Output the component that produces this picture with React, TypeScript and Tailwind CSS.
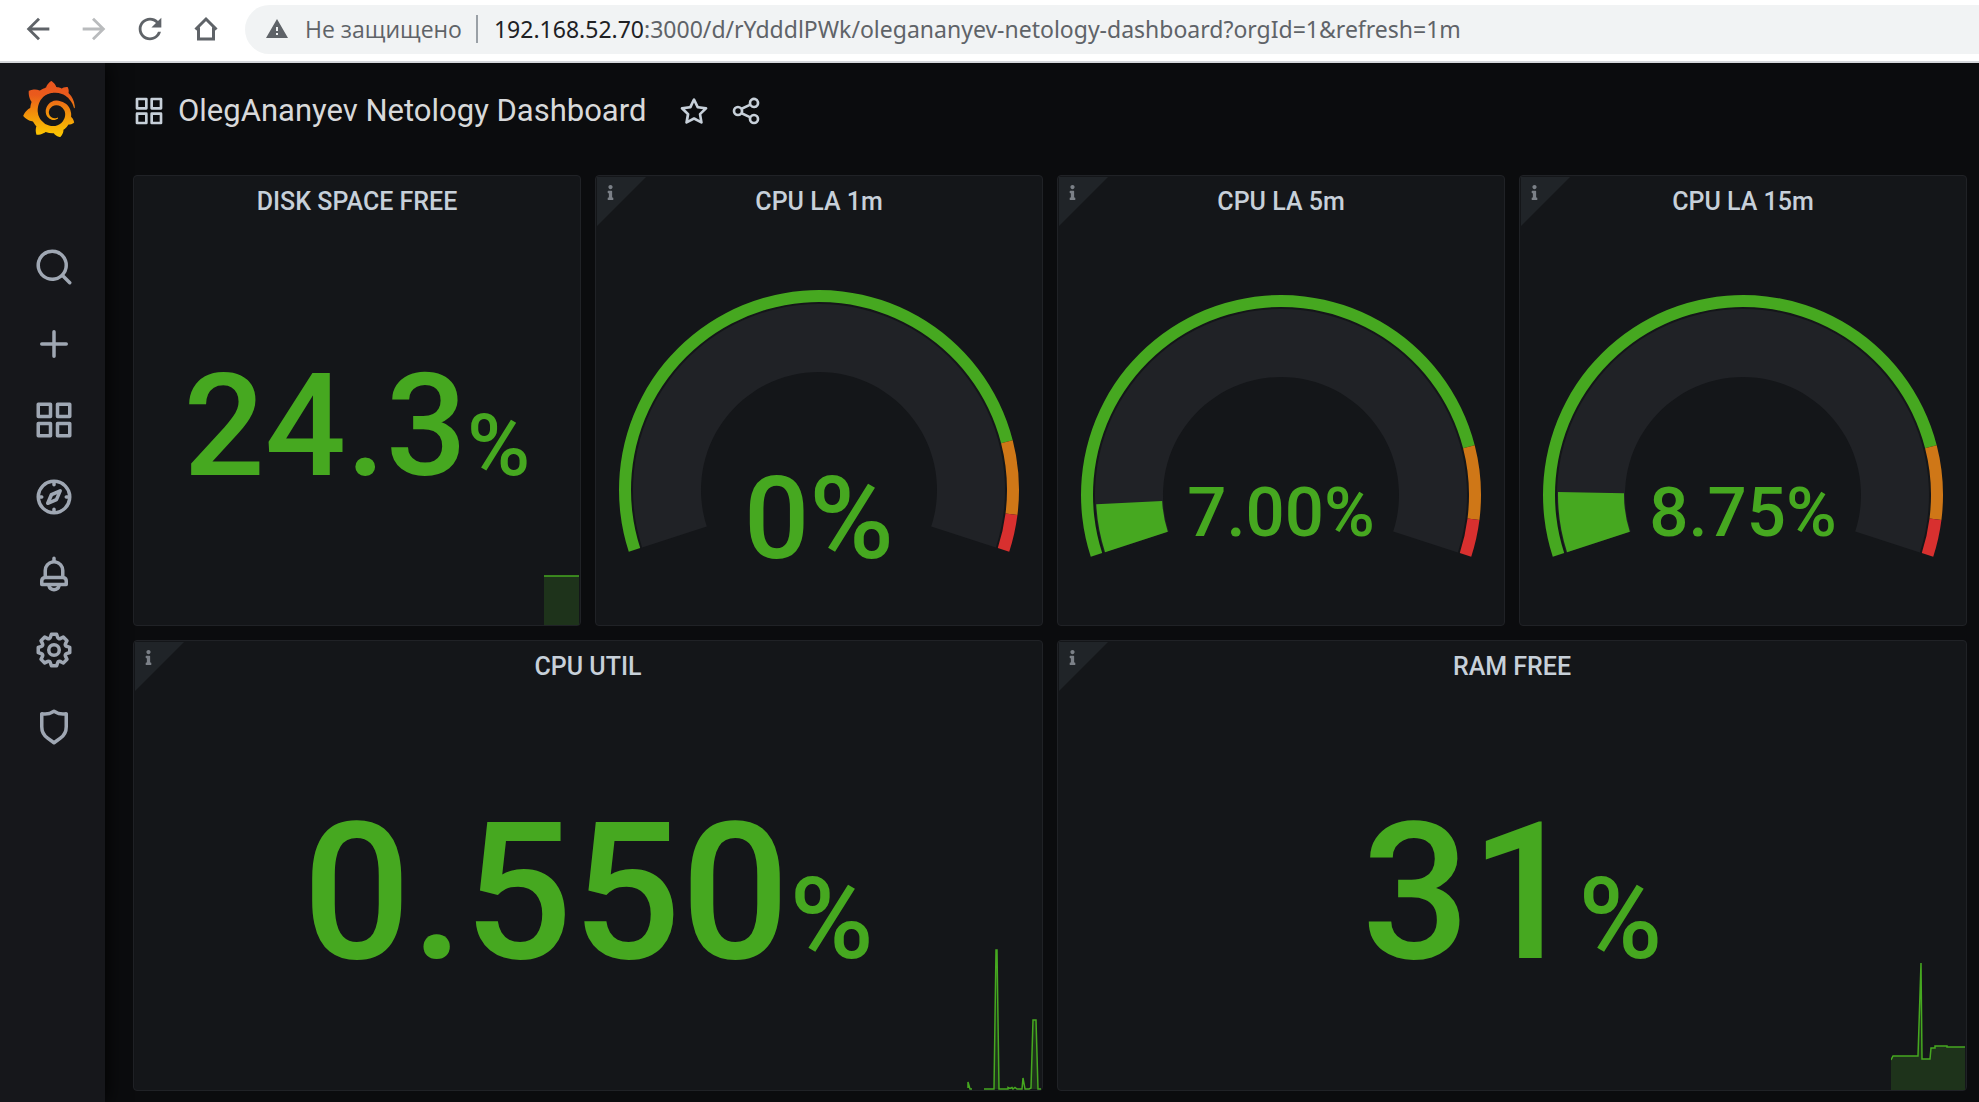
import type { ReactNode } from 'react';
import { MdArrowBack, MdArrowForward, MdRefresh, MdWarning } from 'react-icons/md';
import { SiGrafana } from 'react-icons/si';
import { FaInfo } from 'react-icons/fa';

const icons = {
  search:
    'M21.71,20.29,18,16.61A9,9,0,1,0,16.61,18l3.68,3.68a1,1,0,0,0,1.42,0A1,1,0,0,0,21.71,20.29ZM11,18a7,7,0,1,1,7-7A7,7,0,0,1,11,18Z',
  plus: 'M19,11H13V5a1,1,0,0,0-2,0v6H5a1,1,0,0,0,0,2h6v6a1,1,0,0,0,2,0V13h6a1,1,0,0,0,0-2Z',
  apps: 'M10,13H3a1,1,0,0,0-1,1v7a1,1,0,0,0,1,1h7a1,1,0,0,0,1-1V14A1,1,0,0,0,10,13ZM9,20H4V15H9ZM21,2H14a1,1,0,0,0-1,1v7a1,1,0,0,0,1,1h7a1,1,0,0,0,1-1V3A1,1,0,0,0,21,2ZM20,9H15V4h5Zm1,4H14a1,1,0,0,0-1,1v7a1,1,0,0,0,1,1h7a1,1,0,0,0,1-1V14A1,1,0,0,0,21,13Zm-1,7H15V15h5ZM10,2H3A1,1,0,0,0,2,3v7a1,1,0,0,0,1,1h7a1,1,0,0,0,1-1V3A1,1,0,0,0,10,2ZM9,9H4V4H9Z',
  compass:
    'M12,2A10,10,0,1,0,22,12,10,10,0,0,0,12,2Zm1,17.93V19a1,1,0,0,0-2,0v.93A8,8,0,0,1,4.07,13H5a1,1,0,0,0,0-2H4.07A8,8,0,0,1,11,4.07V5a1,1,0,0,0,2,0V4.07A8,8,0,0,1,19.93,11H19a1,1,0,0,0,0,2h.93A8,8,0,0,1,13,19.93ZM15.14,7.55l-5,2.12a1,1,0,0,0-.52.52l-2.12,5a1,1,0,0,0,.21,1.1,1,1,0,0,0,.7.3.93.93,0,0,0,.4-.09l5-2.12a1,1,0,0,0,.52-.52l2.12-5a1,1,0,0,0-1.31-1.31Zm-2.49,5.1-2.28,1,1-2.28,2.28-1Z',
  bell: 'M18,13.18V10a6,6,0,0,0-5-5.91V3a1,1,0,0,0-2,0V4.09A6,6,0,0,0,6,10v3.18A3,3,0,0,0,4,16v2a1,1,0,0,0,1,1H8.14a4,4,0,0,0,7.72,0H19a1,1,0,0,0,1-1V16A3,3,0,0,0,18,13.18ZM8,10a4,4,0,0,1,8,0v3H8Zm4,10a2,2,0,0,1-1.72-1h3.44A2,2,0,0,1,12,20Zm6-3H6V16a1,1,0,0,1,1-1H17a1,1,0,0,1,1,1Z',
  cog: 'M21.32,9.55l-1.89-.63.89-1.78A1,1,0,0,0,20.13,6L18,3.87a1,1,0,0,0-1.15-.19l-1.78.89-.63-1.89A1,1,0,0,0,13.5,2h-3a1,1,0,0,0-.95.68L8.92,4.57,7.14,3.68A1,1,0,0,0,6,3.87L3.87,6a1,1,0,0,0-.19,1.15l.89,1.78-1.89.63A1,1,0,0,0,2,10.5v3a1,1,0,0,0,.68.95l1.89.63-.89,1.78A1,1,0,0,0,3.87,18L6,20.13a1,1,0,0,0,1.15.19l1.78-.89.63,1.89a1,1,0,0,0,.95.68h3a1,1,0,0,0,.95-.68l.63-1.89,1.78.89A1,1,0,0,0,18,20.13L20.13,18a1,1,0,0,0,.19-1.15l-.89-1.78,1.89-.63A1,1,0,0,0,22,13.5v-3A1,1,0,0,0,21.32,9.55ZM20,12.78l-1.2.4A2,2,0,0,0,17.64,16l.57,1.14-1.1,1.1L16,17.64a2,2,0,0,0-2.79,1.16l-.4,1.2H11.22l-.4-1.2A2,2,0,0,0,8,17.64l-1.14.57-1.1-1.1L6.36,16A2,2,0,0,0,5.2,13.18L4,12.78V11.22l1.2-.4A2,2,0,0,0,6.36,8L5.79,6.89l1.1-1.1L8,6.36A2,2,0,0,0,10.82,5.2l.4-1.2h1.56l.4,1.2A2,2,0,0,0,16,6.36l1.14-.57,1.1,1.1L17.64,8a2,2,0,0,0,1.16,2.79l1.2.4ZM12,8a4,4,0,1,0,4,4A4,4,0,0,0,12,8Zm0,6a2,2,0,1,1,2-2A2,2,0,0,1,12,14Z',
  shield:
    'M19.63,3.65a1,1,0,0,0-.84-.2,8,8,0,0,1-6.22-1.27,1,1,0,0,0-1.14,0A8,8,0,0,1,5.21,3.45a1,1,0,0,0-.84.2A1,1,0,0,0,4,4.43v7.45a9,9,0,0,0,3.77,7.33l3.65,2.6a1,1,0,0,0,1.16,0l3.65-2.6A9,9,0,0,0,20,11.88V4.43A1,1,0,0,0,19.63,3.65ZM18,11.88a7,7,0,0,1-2.93,5.7L12,19.77,8.93,17.58A7,7,0,0,1,6,11.88V5.58a10,10,0,0,0,6-1.39,10,10,0,0,0,6,1.39Z',
  star: 'M22,9.67A1,1,0,0,0,21.14,9l-5.69-.83L12.9,3a1,1,0,0,0-1.8,0L8.55,8.16,2.86,9a1,1,0,0,0-.81.68,1,1,0,0,0,.25,1l4.13,4-1,5.68A1,1,0,0,0,6.9,21.44L12,18.77l5.1,2.67a.93.93,0,0,0,.46.12,1,1,0,0,0,.59-.19,1,1,0,0,0,.4-1l-1-5.68,4.13-4A1,1,0,0,0,22,9.67Zm-6.15,4a1,1,0,0,0-.29.88l.72,4.2-3.76-2a1.06,1.06,0,0,0-.94,0l-3.76,2,.72-4.2a1,1,0,0,0-.29-.88l-3-3,4.21-.61a1,1,0,0,0,.76-.55L12,5.7l1.88,3.82a1,1,0,0,0,.76.55l4.21.61Z',
  share:
    'M18,14a4,4,0,0,0-3.08,1.48l-5.1-2.35a3.64,3.64,0,0,0,0-2.26l5.1-2.35A4,4,0,1,0,14,6a4.17,4.17,0,0,0,.07.71L8.79,9.14a4,4,0,1,0,0,5.72l5.28,2.43A4.17,4.17,0,0,0,14,18a4,4,0,1,0,4-4ZM18,4a2,2,0,1,1-2,2A2,2,0,0,1,18,4ZM6,14a2,2,0,1,1,2-2A2,2,0,0,1,6,14Zm12,6a2,2,0,1,1,2-2A2,2,0,0,1,18,20Z',
};

type IconName = keyof typeof icons;

function Icon({ name, className }: { name: IconName; className: string }) {
  return (
    <svg viewBox="0 0 24 24" fill="currentColor" aria-hidden="true" className={className}>
      <path d={icons[name]} />
    </svg>
  );
}

const navItems: { icon: IconName; label: string }[] = [
  { icon: 'search', label: 'Search' },
  { icon: 'plus', label: 'Create' },
  { icon: 'apps', label: 'Dashboards' },
  { icon: 'compass', label: 'Explore' },
  { icon: 'bell', label: 'Alerting' },
  { icon: 'cog', label: 'Configuration' },
  { icon: 'shield', label: 'Server Admin' },
];

function BrowserBar() {
  return (
    <div className="relative z-20 flex h-[63px] shrink-0 items-center border-b-2 border-[#d5d7db] bg-white pl-[21px] pb-[3px] text-[#5f6368]">
      <div className="flex items-center gap-[22px]">
        <button aria-label="Back"><MdArrowBack size={34} /></button>
        <button aria-label="Forward" className="text-[#b9bbbd]"><MdArrowForward size={34} /></button>
        <button aria-label="Reload"><MdRefresh size={34} /></button>
        <button aria-label="Home">
          <svg width="34" height="34" viewBox="0 0 34 34" fill="none" stroke="currentColor" strokeWidth="3" aria-hidden="true">
            <path d="M6.5 17.5 17 7l10.500 10.500M9.500 15.500V27h15V15.500" />
          </svg>
        </button>
      </div>
      <div className="ml-[22px] flex h-[49px] min-w-0 flex-1 items-center rounded-l-full bg-[#f1f3f4] pl-5 text-[23px]">
        <MdWarning size={24} className="shrink-0" />
        <span className="ml-4 whitespace-nowrap font-['Open_Sans',sans-serif]">Не защищено</span>
        <span className="ml-3.5 h-7 w-0.5 shrink-0 bg-[#9aa0a6]" />
        <label htmlFor="address" className="ml-4 font-['Noto_Sans',sans-serif] text-[#202124]">192.168.52.70</label>
        <input
          id="address"
          className="min-w-0 flex-1 bg-transparent font-['Noto_Sans',sans-serif] outline-none"
          defaultValue=":3000/d/rYdddlPWk/olegananyev-netology-dashboard?orgId=1&refresh=1m"
        />
      </div>
    </div>
  );
}

function SideMenu() {
  return (
    <aside className="z-10 w-[105px] shrink-0 bg-[#16171b] shadow-[0_0_20px_#000]">
      <a href="#home" aria-label="Home" className="ml-[21px] mt-[18px] block w-14">
        <svg width="0" height="0" className="absolute" aria-hidden="true">
          <linearGradient id="flame" x1="0" y1="1" x2="0" y2="0">
            <stop offset="0" stopColor="#fcca00" />
            <stop offset="0.45" stopColor="#f18c0c" />
            <stop offset="0.75" stopColor="#ea5a1c" />
            <stop offset="1" stopColor="#e8551f" />
          </linearGradient>
        </svg>
        <SiGrafana size={56} fill="url(#flame)" />
      </a>
      <nav className="mt-[92px] grid h-[536px] grid-rows-7 pl-[3px] text-[#9fa7b3]">
        {navItems.map((item) => (
          <button key={item.icon} aria-label={item.label} className="flex items-center justify-center">
            <Icon name={item.icon} className="size-[42px]" />
          </button>
        ))}
      </nav>
    </aside>
  );
}

function Panel({ title, info, wide, children }: { title: string; info?: boolean; wide?: boolean; children: ReactNode }) {
  return (
    <section
      className={
        'relative flex min-h-0 min-w-0 flex-col rounded-[4px] border border-[#202226] bg-[#141619]' +
        (wide ? ' col-span-2' : '')
      }
    >
      {info && (
        <button aria-label={`About ${title}`} className="absolute left-px top-px size-[49px]">
          <span className="block size-full bg-[#202428] [clip-path:polygon(0_0,100%_0,0_100%)]" />
          <FaInfo size={15} className="absolute left-1.5 top-2 text-[#7b8087]" />
        </button>
      )}
      <h2 className="flex h-[51px] shrink-0 items-center justify-center text-[25px] font-medium text-[#c7d0d9]">{title}</h2>
      {children}
    </section>
  );
}

function Stat({ value, large }: { value: string; large?: boolean }) {
  return (
    <div className={'flex flex-1 items-center justify-center font-medium text-[#46a820]' + (large ? ' pt-1' : '')}>
      <p className={large ? 'text-[191px] leading-none' : 'text-[143px] leading-none'}>
        {value}
        <span className={large ? 'text-[114px]' : 'text-[86px]'}>%</span>
      </p>
    </div>
  );
}

/* The gauge sweeps 216 degrees, from 198 down to -18. */
function point(radius: number, percent: number) {
  const angle = ((198 - percent * 2.16) * Math.PI) / 180;
  return `${radius * Math.cos(angle)} ${-radius * Math.sin(angle)}`;
}

function band(outer: number, inner: number, from: number, to: number) {
  const large = (to - from) * 2.16 > 180 ? 1 : 0;
  return `M${point(outer, from)}A${outer} ${outer} 0 ${large} 1 ${point(outer, to)}L${point(inner, to)}A${inner} ${inner} 0 ${large} 0 ${point(inner, from)}Z`;
}

function Gauge({ percent, label, big }: { percent: number; label: string; big?: boolean }) {
  return (
    <div className={'flex min-h-0 flex-1 items-center justify-center' + (big ? ' pb-2.5' : '')}>
      <svg viewBox="-201 -201 402 264" className="w-[402px] max-w-full overflow-visible" role="img" aria-label={label}>
        <path d={band(186, 118, 0, 100)} fill="#202226" />
        {percent > 0 && <path d={band(185, 119, 0, percent)} fill="#46a820" />}
        <path d={band(200, 188, 0, 85)} fill="#46a820" />
        <path d={band(200, 188, 85, 95)} fill="#cf7717" />
        <path d={band(200, 188, 95, 100)} fill="#d8302f" />
        <text
          x="0"
          y={big ? 68 : 41}
          textAnchor="middle"
          fill="#46a820"
          className={big ? 'text-[115px] font-medium' : 'text-[69px] font-medium'}
        >
          {label}
        </text>
      </svg>
    </div>
  );
}

function Sparkline({ width, height, line, fill }: { width: number; height: number; line: string; fill: string }) {
  return (
    <svg width={width} height={height} viewBox={`0 0 ${width} ${height}`} className="absolute bottom-0 right-px" aria-hidden="true">
      <path d={fill} fill="#1e331b" />
      <path d={line} fill="none" stroke="#46a820" strokeWidth="1.500" />
    </svg>
  );
}

const cpuLine =
  'M1 139V133L3 140H5M17 140H27L29 1H30L32 140H41V138.500L43 139.500L45 138.500L46 140L48 138.500L50 140H55L56 129L58 140H62L64 139L66 71H69L71 140H74';
const ramLine = 'M0 98L2 94H27L30 1L31 97H39L40 86H44V84H56V85H74';

export default function App() {
  return (
    <div className="flex h-screen flex-col overflow-hidden bg-[#0b0c0e] font-['Roboto',sans-serif]">
      <BrowserBar />
      <div className="flex min-h-0 flex-1">
        <SideMenu />
        <main className="flex min-w-0 flex-1 flex-col">
          <header className="flex h-24 shrink-0 items-center pl-7 text-[#c7d0d9]">
            <Icon name="apps" className="size-8" />
            <h1 className="ml-[13px] text-[31px] text-[#d8d9da]">OlegAnanyev Netology Dashboard</h1>
            <button aria-label="Mark as favorite" className="ml-8">
              <Icon name="star" className="size-8" />
            </button>
            <button aria-label="Share dashboard" className="ml-5">
              <Icon name="share" className="size-8" />
            </button>
          </header>
          <div className="mt-4 grid min-h-0 flex-1 grid-cols-4 grid-rows-2 gap-3.5 pb-[11px] pl-7 pr-3">
            <Panel title="DISK SPACE FREE">
              <Stat value="24.3" />
              <Sparkline width={35} height={50} line="M0 1H35" fill="M0 1H35V50H0Z" />
            </Panel>
            <Panel title="CPU LA 1m" info>
              <Gauge percent={0} label="0%" big />
            </Panel>
            <Panel title="CPU LA 5m" info>
              <Gauge percent={7} label="7.00%" />
            </Panel>
            <Panel title="CPU LA 15m" info>
              <Gauge percent={8.75} label="8.75%" />
            </Panel>
            <Panel title="CPU UTIL" info wide>
              <Stat value="0.550" large />
              <Sparkline width={74} height={141} line={cpuLine} fill="M27 140L29 1H30L32 140ZM64 140L66 71H69L71 140Z" />
            </Panel>
            <Panel title="RAM FREE" info wide>
              <Stat value="31" large />
              <Sparkline width={74} height={128} line={ramLine} fill={`${ramLine}V128H0Z`} />
            </Panel>
          </div>
        </main>
      </div>
    </div>
  );
}
